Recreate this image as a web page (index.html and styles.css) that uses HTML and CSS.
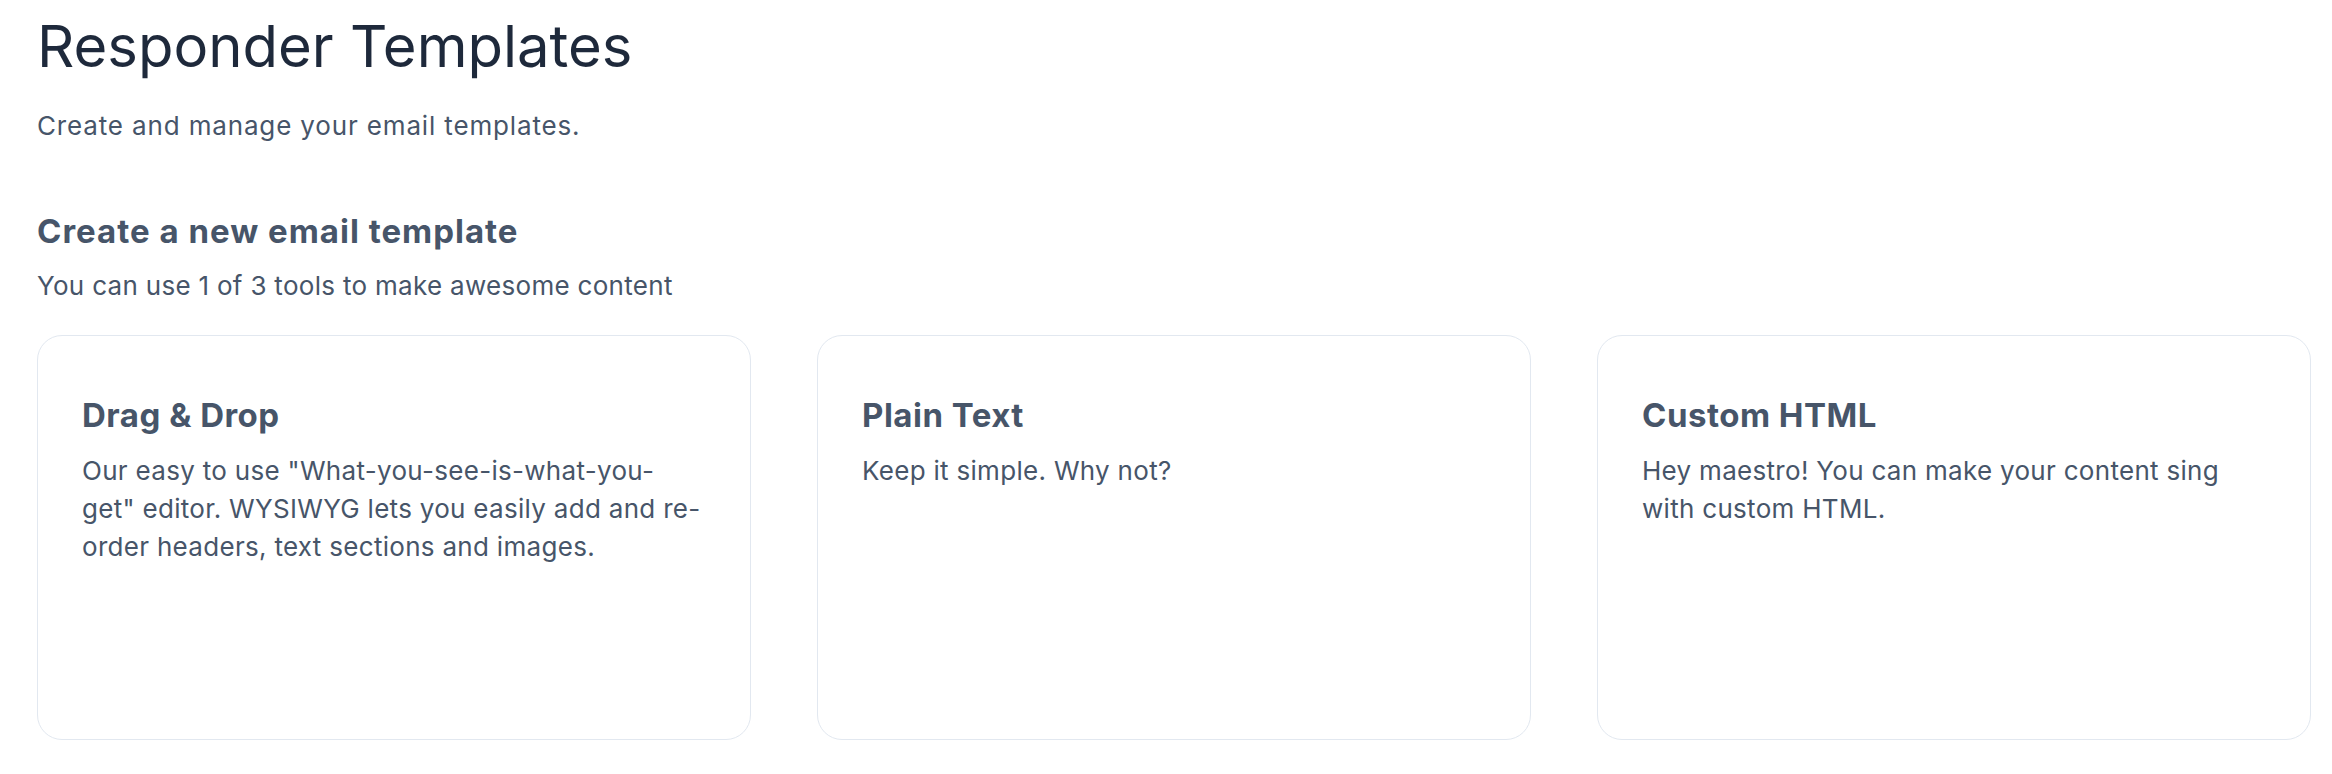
FILE: index.html
```html
<!DOCTYPE html>
<html lang="en">
<head>
<meta charset="utf-8">
<title>Responder Templates</title>
<link rel="stylesheet" href="styles.css">
</head>
<body>
<main class="page">
  <header class="page-header">
    <h1 class="page-title">Responder Templates</h1>
    <p class="page-subtitle">Create and manage your email templates.</p>
  </header>
  <section class="create">
    <h2 class="section-title">Create a new email template</h2>
    <p class="section-text">You can use 1 of 3 tools to make awesome content</p>
    <div class="cards">
      <article class="card">
        <h3 class="card-title">Drag &amp; Drop</h3>
        <p class="card-text">Our easy to use "What-you-see-is-what-you-get" editor. WYSIWYG lets you easily add and re-order headers, text sections and images.</p>
      </article>
      <article class="card">
        <h3 class="card-title">Plain Text</h3>
        <p class="card-text">Keep it simple. Why not?</p>
      </article>
      <article class="card">
        <h3 class="card-title">Custom HTML</h3>
        <p class="card-text">Hey maestro! You can make your content sing with custom HTML.</p>
      </article>
    </div>
  </section>
</main>
</body>
</html>
```
FILE: styles.css
```css
* { box-sizing: border-box; }
html, body { margin: 0; padding: 0; background: #ffffff; }
body {
  font-family: Inter, "Noto Sans", "Liberation Sans", sans-serif;
  color: #475569;
}
.page {
  padding: 12px 21px 0 37px;
}
.page-title {
  margin: 0;
  font-size: 58px;
  line-height: 68px;
  font-weight: 400;
  color: #1e293b;
}
.page-subtitle {
  margin: 30px 0 0;
  font-size: 26px;
  line-height: 32px;
  letter-spacing: 0.85px;
  color: #475569;
}
.section-title {
  margin: 69px 0 0;
  font-size: 33px;
  line-height: 40px;
  font-weight: 700;
  letter-spacing: 1px;
  color: #475569;
}
.section-text {
  margin: 19px 0 0;
  font-size: 26px;
  line-height: 32px;
  letter-spacing: 0.3px;
}
.cards {
  margin-top: 33px;
  display: grid;
  grid-template-columns: repeat(3, 1fr);
  gap: 66px;
}
.card {
  height: 405px;
  border: 1px solid #e2e8f0;
  border-radius: 25px;
  padding: 59px 44px 44px;
  background: #fff;
}
.card-title {
  margin: 0;
  font-size: 33px;
  line-height: 40px;
  font-weight: 700;
  letter-spacing: 0.5px;
  color: #475569;
}
.card-text {
  margin: 17px 0 0;
  font-size: 26px;
  line-height: 38px;
  letter-spacing: 0.3px;
  color: #475569;
}
```
